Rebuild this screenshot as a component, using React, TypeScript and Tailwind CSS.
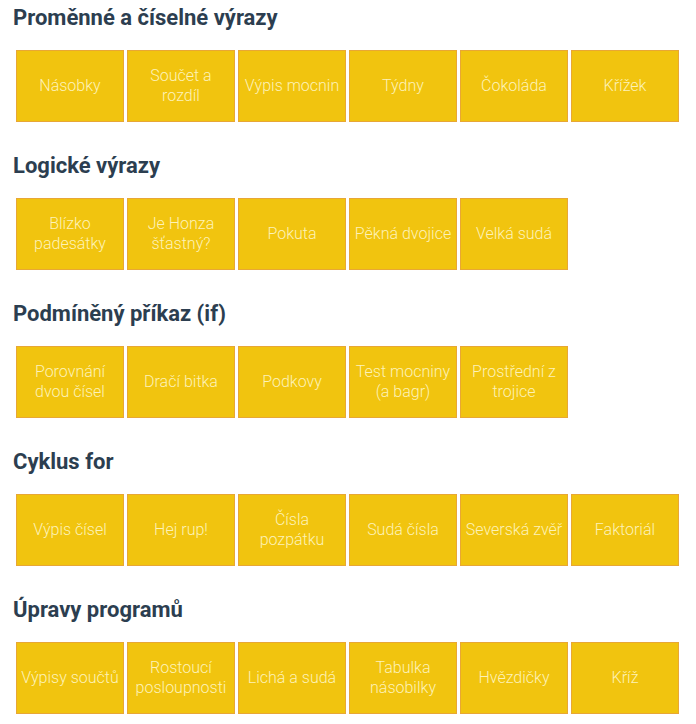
import React from "react";

const sections: { title: string; items: string[][] }[] = [
  {
    title: "Proměnné a číselné výrazy",
    items: [["Násobky"], ["Součet a", "rozdíl"], ["Výpis mocnin"], ["Týdny"], ["Čokoláda"], ["Křížek"]],
  },
  {
    title: "Logické výrazy",
    items: [["Blízko", "padesátky"], ["Je Honza", "šťastný?"], ["Pokuta"], ["Pěkná dvojice"], ["Velká sudá"]],
  },
  {
    title: "Podmíněný příkaz (if)",
    items: [["Porovnání", "dvou čísel"], ["Dračí bitka"], ["Podkovy"], ["Test mocniny", "(a bagr)"], ["Prostřední z", "trojice"]],
  },
  {
    title: "Cyklus for",
    items: [["Výpis čísel"], ["Hej rup!"], ["Čísla", "pozpátku"], ["Sudá čísla"], ["Severská zvěř"], ["Faktoriál"]],
  },
  {
    title: "Úpravy programů",
    items: [["Výpisy součtů"], ["Rostoucí", "posloupnosti"], ["Lichá a sudá"], ["Tabulka", "násobilky"], ["Hvězdičky"], ["Kříž"]],
  },
];

export default function App() {
  return (
    <div className="w-[696px] h-[724px] bg-white overflow-hidden" style={{ fontFamily: "Roboto, 'Noto Sans', sans-serif" }}>
      {sections.map((s) => (
        <div key={s.title} className="pt-[5px] pb-[26px]">
          <h2 className="pl-[13px] text-[22px] leading-[26px] font-bold text-[#2c3e50]">{s.title}</h2>
          <div className="mt-[19px] pl-[16px] flex gap-[3px]">
            {s.items.map((lines) => (
              <div
                key={lines.join(" ")}
                className="w-[108px] h-[72px] bg-[#f1c40f] border border-[#e8a735] flex flex-col items-center justify-center text-center text-[16px] leading-[20px] font-light text-[#fdf2b8]"
              >
                {lines.map((l) => (
                  <span key={l} className="whitespace-nowrap">{l}</span>
                ))}
              </div>
            ))}
          </div>
        </div>
      ))}
    </div>
  );
}
